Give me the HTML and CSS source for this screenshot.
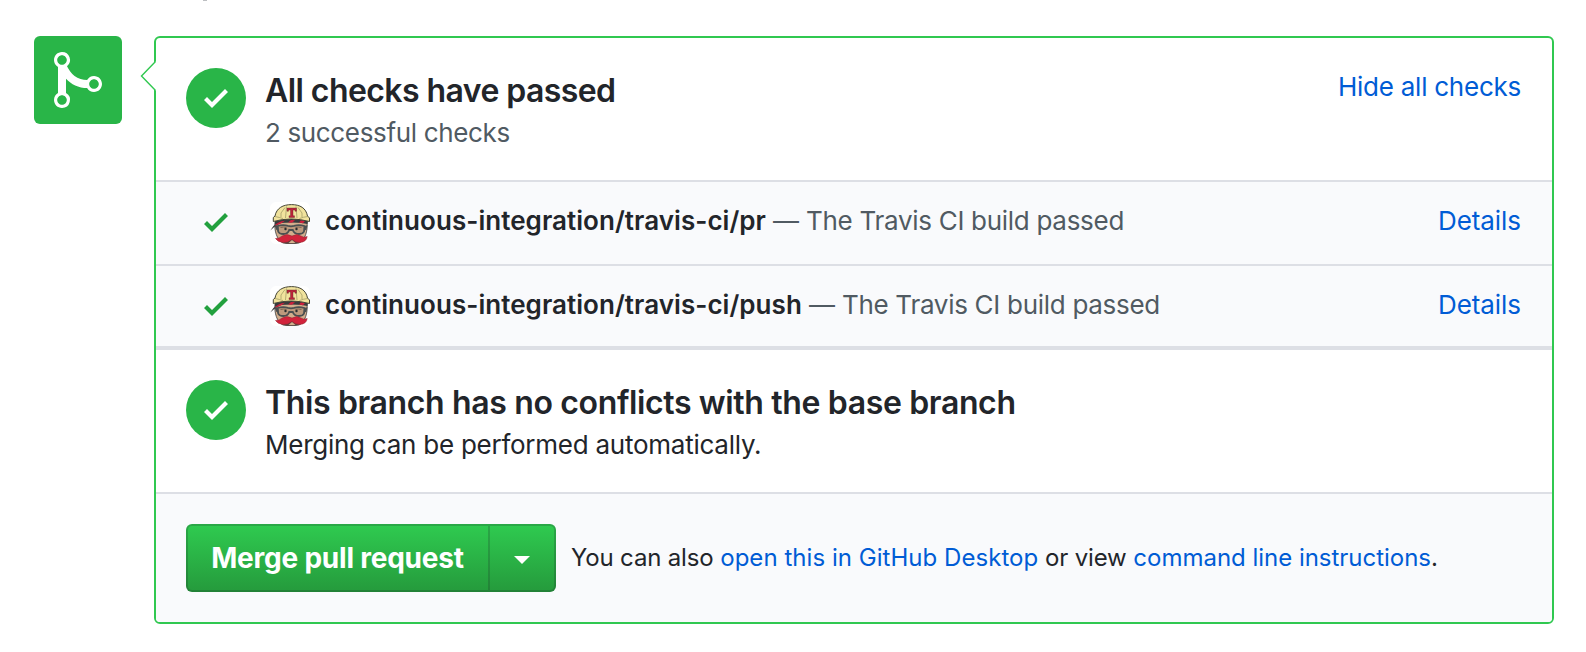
FILE: index.html
```html
<!DOCTYPE html>
<html lang="en">
<head>
<meta charset="utf-8">
<title>Merge pull request</title>
<link rel="stylesheet" href="styles.css">
</head>
<body>
<svg class="defs" width="0" height="0" aria-hidden="true">
  <symbol id="check" viewBox="0 0 12 16"><path d="M12 5l-8 8-4-4 1.5-1.5L4 10l6.5-6.5L12 5z"/></symbol>
  <symbol id="travis" viewBox="0 0 40 40">
    <path d="M5 18C4 27 7 36 13 39Q21 41 29 39C35 36 38 27 37 18z" fill="#d3ae8c" stroke="#3d3f40" stroke-width=".8"/>
    <path d="M9 35Q11 38.500 15 39.300Q22 40.500 28 39Q32 38 34 35z" fill="#55433f"/>
    <path d="M.3 26.500Q3.500 21 8 18L10 19.500Q5 22 .3 26.500zM5 17Q20 13 38 16.500L37.500 20Q22 16.500 5 20z" fill="#393b3d"/>
    <path d="M4 22Q8 17.500 15 16.800L11 19.500zM18 18.500l3-2.400 4 .2-3 2.400zM29 18.500l2-2.200 4 .8-2 2.200z" fill="#cf1f3c"/>
    <path d="M7.500 22Q13 20.500 18 21.800L21 22.300 24 21.800Q29 20.500 34.500 22L34 27.500Q33 30 29 30 24 30 22.800 26H19.200Q18 30 13.500 30 9 30 8.200 27.500z" fill="#bd9a7d" stroke="#4b5051" stroke-width="1.800"/>
    <path d="M4.500 21l4 1.500v4.500L6 25.500zM37.500 21l-3.500 1.500v4.500l2.500-1.500z" fill="#4b5051"/>
    <path d="M10.500 23.500q3-1 6 0M25.500 23.500q3-1 6 0" fill="none" stroke="#6b5848" stroke-width=".8"/>
    <circle cx="15.500" cy="25" r="1.200" fill="#292d30"/><circle cx="26.500" cy="25" r="1.200" fill="#292d30"/>
    <path d="M5.500 34.500Q9.500 34.500 12 32Q17 29 22 32Q27 29 31 32Q33.500 34 37.200 32.500Q36.500 38 30 38.400Q25 38.500 22 35.500Q18 38.800 13 38.500Q7.500 38 5.500 34.500z" fill="#d1233b" stroke="#8e2932" stroke-width=".5"/>
    <path d="M18.500 39l3.500-3 3.500 3z" fill="#d3ae8c"/>
    <path d="M3.300 17.500V13.500L5 12C6.500 4 13 .6 21.500 .6S36 4 37.500 12L39.500 14V17.500Q21 12.500 3.300 17.500z" fill="#f1e39d" stroke="#454537" stroke-width="1"/>
    <path d="M5 12.500Q10 13.500 13 14.500M38 12.500Q33 13 29.500 14.500M11 13V9l4-5.500M32 13V9l-4-5.500M15.500 14L16.500 2.500M27 14L26 2.500" fill="none" stroke="#9a935f" stroke-width=".7"/>
    <path d="M17 4h9.500v3.200H25V6h-2v5.800h1.500v1.700h-5.500v-1.700h1.500V6h-2v1.200H17z" fill="#bd223a" stroke="#5a2b2b" stroke-width=".4"/>
  </symbol>
</svg>

<div class="cutoff"></div>
<main class="merge">
  <div class="merge-icon">
    <svg width="48" height="64" viewBox="0 0 12 16" fill="#fff"><path fill-rule="evenodd" d="M10 7c-.73 0-1.380.41-1.730 1.020V8C7.220 7.980 6 7.640 5.140 6.980c-.75-.58-1.500-1.610-1.890-2.440A1.993 1.993 0 0 0 2 .99C.89.99 0 1.890 0 3a2 2 0 0 0 1 1.720v6.560c-.59.35-1 .99-1 1.720 0 1.110.89 2 2 2a1.993 1.993 0 0 0 1-3.720V7.670c.67.7 1.440 1.270 2.300 1.690.86.42 2.030.63 2.970.64v-.02c.36.61 1 1.020 1.730 1.020 1.110 0 2-.89 2-2 0-1.110-.89-2-2-2zm-6.800 6c0 .66-.55 1.200-1.200 1.200-.65 0-1.200-.55-1.200-1.200 0-.65.55-1.200 1.200-1.200.65 0 1.200.55 1.200 1.200zM2 4.200C1.340 4.200.8 3.650.8 3c0-.65.55-1.200 1.200-1.200.65 0 1.200.55 1.200 1.200 0 .65-.55 1.200-1.200 1.200zm8 6c-.66 0-1.200-.55-1.200-1.200 0-.65.55-1.200 1.200-1.200.65 0 1.200.55 1.200 1.200 0 .65-.55 1.200-1.200 1.200z"/></svg>
  </div>
  <div class="box">
    <svg class="pointer" width="17" height="32" viewBox="0 0 17 32"><path d="M17 1.500H15.500L1.500 16l14 14.500H17z" fill="#fff"/><path d="M15.500 1.500L1.500 16l14 14.500" fill="none" stroke="#30c850" stroke-width="1.400"/></svg>
    <section class="status">
      <span class="badge"><svg class="check" width="24" height="32"><use href="#check"/></svg></span>
      <div class="status-text">
        <h1 class="title title-checks">All checks have passed</h1>
        <p class="sub sub-muted">2 successful checks</p>
      </div>
      <a class="link toggle">Hide all checks</a>
    </section>
    <div class="row row-first">
      <svg class="check row-check" width="24" height="32"><use href="#check"/></svg>
      <span class="avatar"><svg width="40" height="40"><use href="#travis"/></svg></span>
      <div class="row-text"><strong class="context">continuous-integration/travis-ci/pr</strong><span class="dash">—</span><span class="desc">The Travis CI build passed</span></div>
      <a class="link details">Details</a>
    </div>
    <div class="row row-last">
      <svg class="check row-check" width="24" height="32"><use href="#check"/></svg>
      <span class="avatar"><svg width="40" height="40"><use href="#travis"/></svg></span>
      <div class="row-text"><strong class="context">continuous-integration/travis-ci/push</strong><span class="dash">—</span><span class="desc">The Travis CI build passed</span></div>
      <a class="link details">Details</a>
    </div>
    <section class="status">
      <span class="badge"><svg class="check" width="24" height="32"><use href="#check"/></svg></span>
      <div class="status-text">
        <h1 class="title title-branch">This branch has no conflicts with the base branch</h1>
        <p class="sub sub-merge">Merging can be performed automatically.</p>
      </div>
    </section>
    <footer class="actions">
      <div class="btn-group">
        <button class="btn btn-merge">Merge pull request</button>
        <button class="btn btn-caret" aria-label="Select merge method"><svg width="16" height="8" viewBox="0 0 16 8"><path d="M0 0h16L8 8z" fill="#fff"/></svg></button>
      </div>
      <p class="hint"><span class="lead">You can also</span> <a class="link desktop">open this in GitHub Desktop</a> <span class="mid">or view</span> <a class="link commands">command line instructions</a>.</p>
    </footer>
  </div>
</main>
</body>
</html>
```
FILE: styles.css
```css
* { box-sizing: border-box; }
body {
  margin: 0;
  background: #fff;
  color: #22252a;
  font-family: Inter, "Liberation Sans", sans-serif;
  font-size: 26px;
}
h1, p { margin: 0; }
svg { display: block; flex: none; }
.defs { position: absolute; }
.cutoff { width: 4px; height: 1px; margin-left: 203px; background: #bdbfc2; }
.merge { display: flex; gap: 32px; padding: 35px 32px 28px 34px; }
.merge-icon {
  flex: none;
  width: 88px;
  height: 88px;
  padding: 12px 20px;
  border-radius: 6px;
  background: #29b548;
}
.box {
  position: relative;
  flex: 1;
  height: 588px;
  border: 2px solid #30c850;
  border-radius: 6px;
}
.pointer { position: absolute; left: -16px; top: 22px; }
.link { color: #005cd5; }
.check { fill: #fff; }

.status { display: flex; height: 142px; padding: 30px 31px 30px 30px; }
.badge {
  flex: none;
  width: 60px;
  height: 60px;
  margin-right: 19px;
  padding: 14px 18px;
  border-radius: 50%;
  background: #29b548;
}
.status-text { flex: 1; white-space: nowrap; }
.title { padding-top: 1px; font-size: 32px; font-weight: 600; line-height: 44px; }
.title-checks { letter-spacing: -.57px; }
.title-branch { letter-spacing: -.36px; }
.sub { margin-top: -1px; line-height: 41px; }
.sub-muted { color: #505a62; letter-spacing: -.35px; }
.sub-merge { letter-spacing: -.25px; }
.toggle { line-height: 37px; letter-spacing: -.25px; }

.row {
  display: flex;
  padding: 0 31px 0 48px;
  border-top: 2px solid #dddfe5;
  background: #f9fafc;
  line-height: 77px;
}
.row-first { height: 84px; }
.row-last { height: 86px; border-bottom: 4px solid #dddfe5; }
.row-check { margin: 24px 42px 0 0; fill: #22a03e; }
.avatar {
  display: flex;
  align-items: flex-end;
  flex: none;
  width: 40px;
  height: 40px;
  margin: 20px 15px 0 0;
  border-radius: 6px;
  background: #fff;
}
.row-first .avatar { height: 42px; }
.row-text { display: flex; flex: 1; gap: 7px; color: #505a62; white-space: nowrap; }
.context { color: #22252a; font-weight: 600; letter-spacing: .05px; }
.desc { letter-spacing: -.29px; }
.details { letter-spacing: -.06px; }

.actions {
  display: flex;
  align-items: center;
  gap: 15px;
  height: 130px;
  padding: 0 30px;
  border-top: 2px solid #dddfe5;
  border-radius: 0 0 4px 4px;
  background: #f9fafc;
}
.btn-group { display: flex; height: 68px; }
.btn {
  padding: 0;
  border: 2px solid rgba(27, 31, 35, .2);
  background: linear-gradient(#2fcb50, #259a3c) border-box;
  color: #fff;
  font: 600 28px/64px Inter, "Liberation Sans", sans-serif;
}
.btn-merge {
  width: 304px;
  padding-right: 1px;
  border-radius: 6px 0 0 6px;
  font-weight: 700;
  letter-spacing: -.22px;
}
.btn-caret {
  display: flex;
  justify-content: center;
  width: 66px;
  padding-top: 30px;
  border-left: 0;
  border-radius: 0 6px 6px 0;
}
.hint { font-size: 24px; line-height: 36px; white-space: nowrap; }
.lead { letter-spacing: -.17px; }
.desktop { letter-spacing: .04px; }
.mid { letter-spacing: -.15px; }
.commands { letter-spacing: -.02px; }
```
